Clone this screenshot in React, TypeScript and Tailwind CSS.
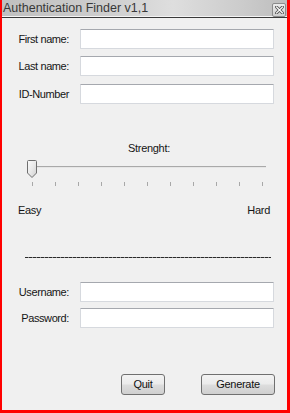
import React from "react";

const font = { fontFamily: '"Liberation Sans", Arial, sans-serif' };

function Field({ label, className }: { label: string; className?: string }) {
  return (
    <div className={`flex h-[20px] items-center ${className ?? ""}`}>
      <div className="w-[68px] pr-px text-right text-[11px] leading-[13px] tracking-[-0.4px] text-[#151515]">
        {label}
      </div>
      <input
        className="ml-[10px] h-[20px] w-[194px] rounded-[1px] border border-[#d6d9de] border-t-[#a5a8ae] bg-white px-1 text-[11px] outline-none"
        type={label.startsWith("Password") ? "password" : "text"}
      />
    </div>
  );
}

function Slider() {
  const ticks = Array.from({ length: 11 }, (_, i) => 12.5 + i * 23);
  return (
    <svg width="255" height="30" viewBox="0 0 255 30" className="ml-[18px] mt-[3px] block">
      <defs>
        <linearGradient id="thumb" x1="0" y1="0" x2="1" y2="1">
          <stop offset="0" stopColor="#fbfbfb" />
          <stop offset="0.5" stopColor="#e9e9e9" />
          <stop offset="1" stopColor="#cfcfcf" />
        </linearGradient>
      </defs>
      <rect x="13" y="8" width="233" height="1" fill="#a9a9a9" />
      <rect x="13" y="9" width="233" height="1" fill="#e6e6e6" />
      {ticks.map((x) => (
        <line key={x} x1={x} y1="24" x2={x} y2="28" stroke="#a8a8a8" strokeWidth="1" />
      ))}
      <path
        d="M7.5 3.5 Q7.5 2.5 8.5 2.5 H15.5 Q16.5 2.5 16.5 3.5 V15 L12 19.5 L7.5 15 Z"
        fill="url(#thumb)"
        stroke="#6f6f6f"
        strokeWidth="1"
      />
    </svg>
  );
}

function WinButton({ label, w }: { label: string; w: string }) {
  return (
    <button
      className={`${w} h-[21px] rounded-[3px] border border-[#707070] bg-[linear-gradient(180deg,#f3f3f3_0%,#ebebeb_48%,#dddddd_52%,#cfcfcf_100%)] text-[11px] leading-[13px] tracking-[-0.3px] text-[#111]`}
    >
      {label}
    </button>
  );
}

export default function App() {
  return (
    <div
      className="flex h-[413px] w-[290px] flex-col border-b-[3px] border-l-2 border-r-[3px] border-[#ff0000] bg-[#f0f0f0]"
      style={font}
    >
      {/* title bar */}
      <div className="flex h-[17px] items-center justify-between border-b border-[#f4f4f4] bg-[linear-gradient(90deg,#c0c0c0_0%,#cdcdcd_35%,#dedede_60%,#cbcbcb_85%,#bdbdbd_100%)] pl-[1px] pr-px">
        <span className="text-[12.5px] leading-[14px] text-[#383838]">Authentication Finder v1,1</span>
        <div className="mt-[4px] flex h-[14px] w-[14px] items-center justify-center rounded-[2px] border border-[#8c8c8c] bg-[linear-gradient(180deg,#ececec,#cfcfcf)]">
          <svg width="9" height="8" viewBox="0 0 9 8">
            <path d="M1.5 1 L7.5 7 M7.5 1 L1.5 7" stroke="#555" strokeWidth="3" strokeLinecap="square" />
            <path d="M1.5 1 L7.5 7 M7.5 1 L1.5 7" stroke="#fff" strokeWidth="1.2" strokeLinecap="square" />
          </svg>
        </div>
      </div>
      <div className="h-px bg-[#3a3a3a]" />

      {/* body */}
      <div className="flex flex-1 flex-col">
        <Field label="First name:" className="mt-[11px]" />
        <Field label="Last name:" className="mt-[7px]" />
        <Field label="ID-Number" className="mt-[8px]" />

        <div className="mt-[38px] pl-[126px] text-[11px] leading-[13px] tracking-[-0.3px] text-[#151515]">Strenght:</div>
        <Slider />
        <div className="mt-[16px] flex justify-between pl-[16px] pr-[17px] text-[11px] leading-[13px] tracking-[-0.3px] text-[#151515]">
          <span>Easy</span>
          <span>Hard</span>
        </div>

        <div className="ml-[23px] mt-[40px] h-px w-[246px] bg-[repeating-linear-gradient(90deg,#2a2a2a_0_3px,#8a8a8a_3px_4px)]" />

        <Field label="Username:" className="mt-[24px]" />
        <Field label="Password:" className="mt-[6px]" />

        <div className="mt-[46px] flex justify-end gap-[36px] pr-[12px]">
          <WinButton label="Quit" w="w-[44px]" />
          <WinButton label="Generate" w="w-[74px]" />
        </div>
      </div>
    </div>
  );
}
